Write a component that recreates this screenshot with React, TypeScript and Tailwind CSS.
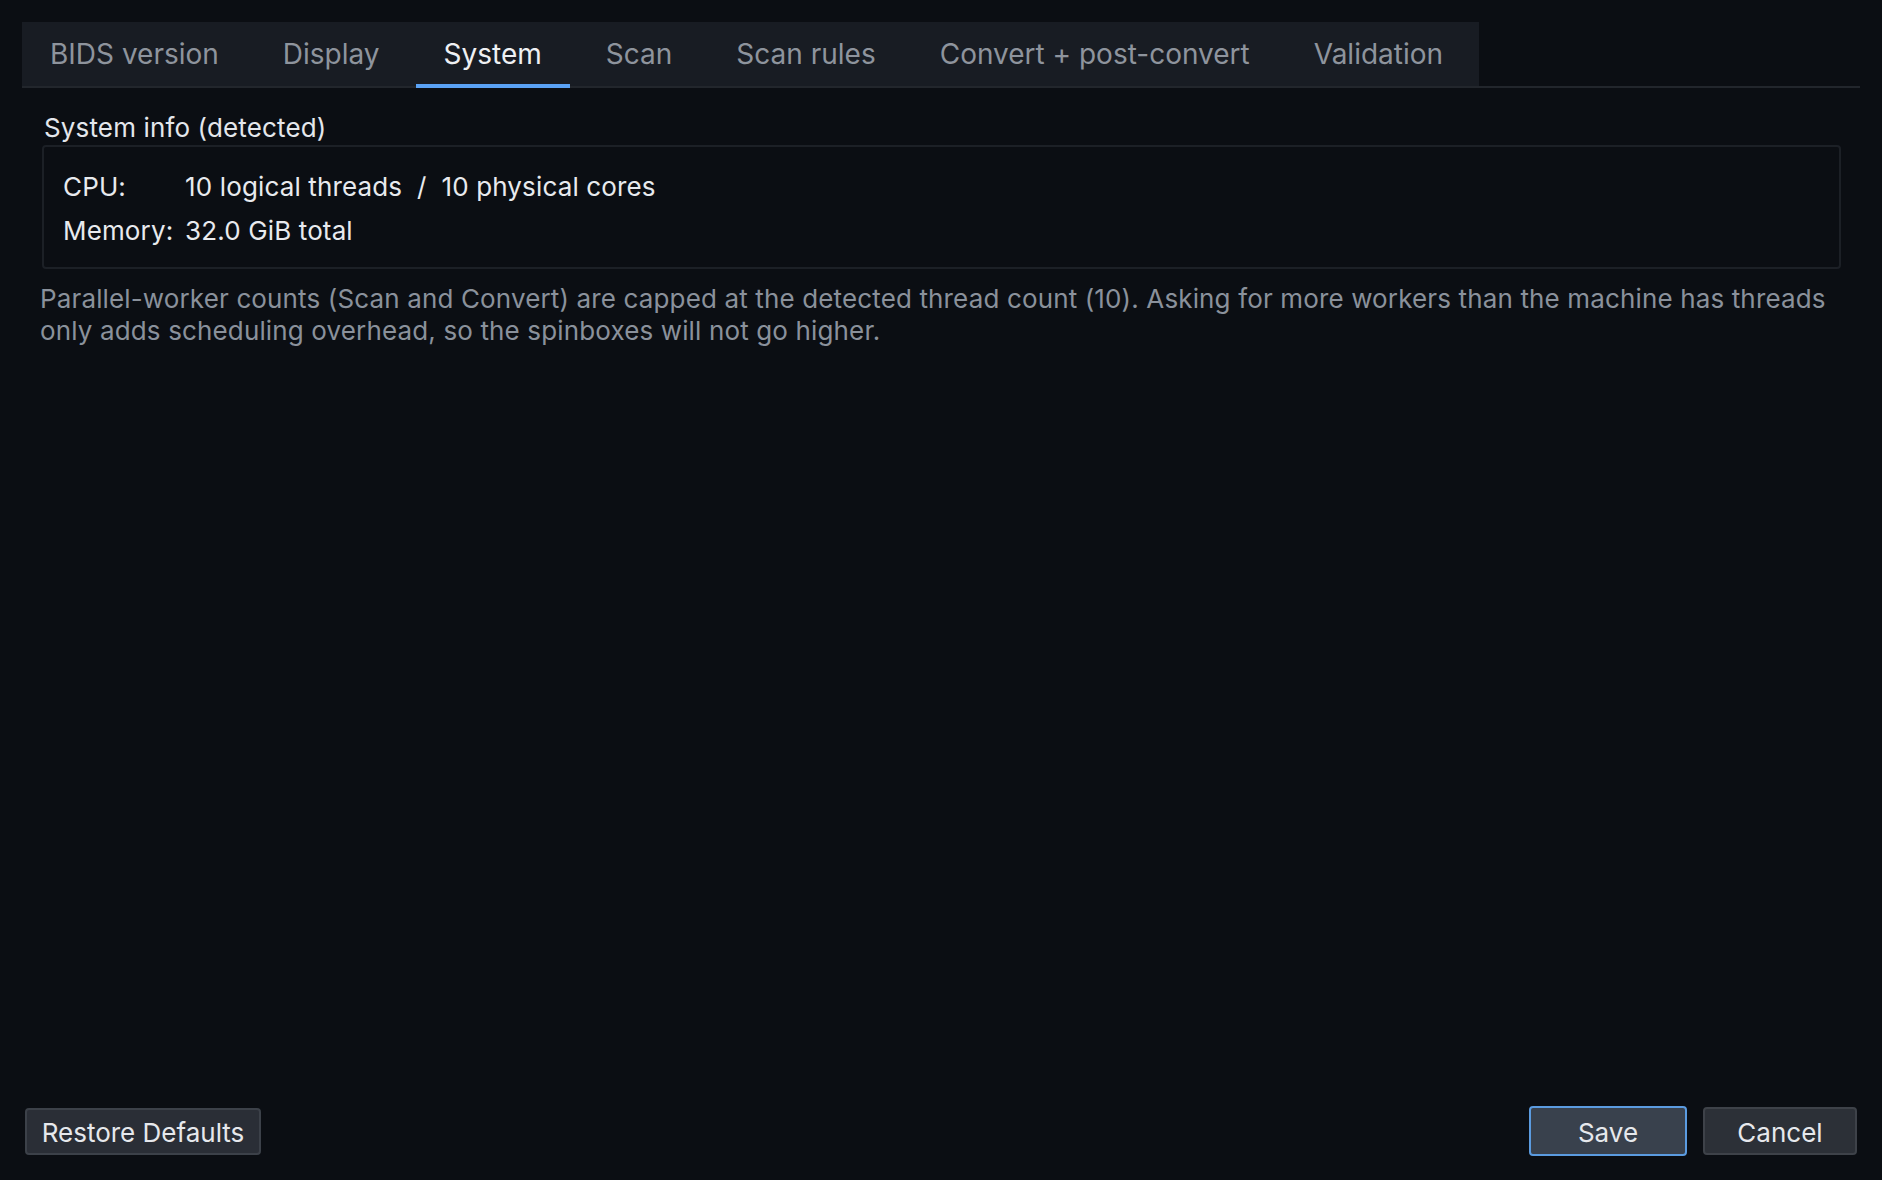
import { useState } from 'react';

const TABS = ['BIDS version', 'Display', 'System', 'Scan', 'Scan rules', 'Convert + post-convert', 'Validation'];

const FONT = "font-['Inter','Noto_Sans',sans-serif]";

function InfoRow({ label, value }: { label: string; value: string }) {
  return (
    <div className="flex h-[30px] items-center">
      <span className="w-[122px] shrink-0">{label}</span>
      <span className="whitespace-pre">{value}</span>
    </div>
  );
}

export default function App() {
  const [tab, setTab] = useState('System');

  return (
    <div className={`${FONT} flex h-[1180px] w-full flex-col bg-[#0b0e13] px-[22px] pt-[22px] pb-[24px] text-[#e4e7ec]`}>
      {/* tab strip */}
      <div className="flex border-b-2 border-[#22262c]">
        <div className="flex h-[66px] -mb-[2px] gap-[8px] border-b-2 border-[#22262c] bg-[#181c23] pr-[8px]">
          {TABS.map((t) => {
            const active = t === tab;
            return (
              <button
                key={t}
                type="button"
                onClick={() => setTab(t)}
                className={`relative px-[28px] text-[28px] leading-none ${active ? 'text-[#eef0f3]' : 'text-[#8e949d]'}`}
              >
                {t}
                {active && <span className="absolute inset-x-0 -bottom-[2px] h-[4px] bg-[#5aa2f5]" />}
              </button>
            );
          })}
        </div>
      </div>

      {/* System page */}
      <div className="flex flex-1 flex-col pl-[20px] pr-[19px] pt-[25px] tracking-[0.14px]">
        <div className="pl-[2px] text-[26px] leading-[30px] text-[#e4e7ec]">System info (detected)</div>
        <div className="mt-[2px] flex flex-col gap-[14px] rounded-[4px] border-2 border-[#1c2026] pt-[24px] pb-[22px] pl-[19px] text-[26px] text-[#e8eaee]">
          <InfoRow label="CPU:" value="10 logical threads  /  10 physical cores" />
          <InfoRow label="Memory:" value="32.0 GiB total" />
        </div>
        <p className="-ml-[2px] mt-[14px] text-[26px] leading-[32px] text-[#8a919b]">
          Parallel-worker counts (Scan and Convert) are capped at the detected thread count (10). Asking for more workers
          than the machine has threads only adds scheduling overhead, so the spinboxes will not go higher.
        </p>
      </div>

      {/* dialog buttons */}
      <div className="flex items-center px-[3px]">
        <button
          type="button"
          className="h-[47px] w-[236px] rounded-[4px] border-2 border-[#3c4149] bg-[#2a2e36] pt-[2px] text-[26px] text-[#e6e8ec]"
        >
          Restore Defaults
        </button>
        <div className="flex-1" />
        <button
          type="button"
          className="h-[50px] w-[158px] rounded-[4px] border-2 border-[#5b9be0] bg-[#39414d] pt-[2px] text-[26px] text-[#e6e8ec]"
        >
          Save
        </button>
        <button
          type="button"
          className="ml-[16px] h-[48px] w-[154px] rounded-[4px] border-2 border-[#3e4249] bg-[#2c3037] pt-[2px] text-[26px] text-[#e6e8ec]"
        >
          Cancel
        </button>
      </div>
    </div>
  );
}
